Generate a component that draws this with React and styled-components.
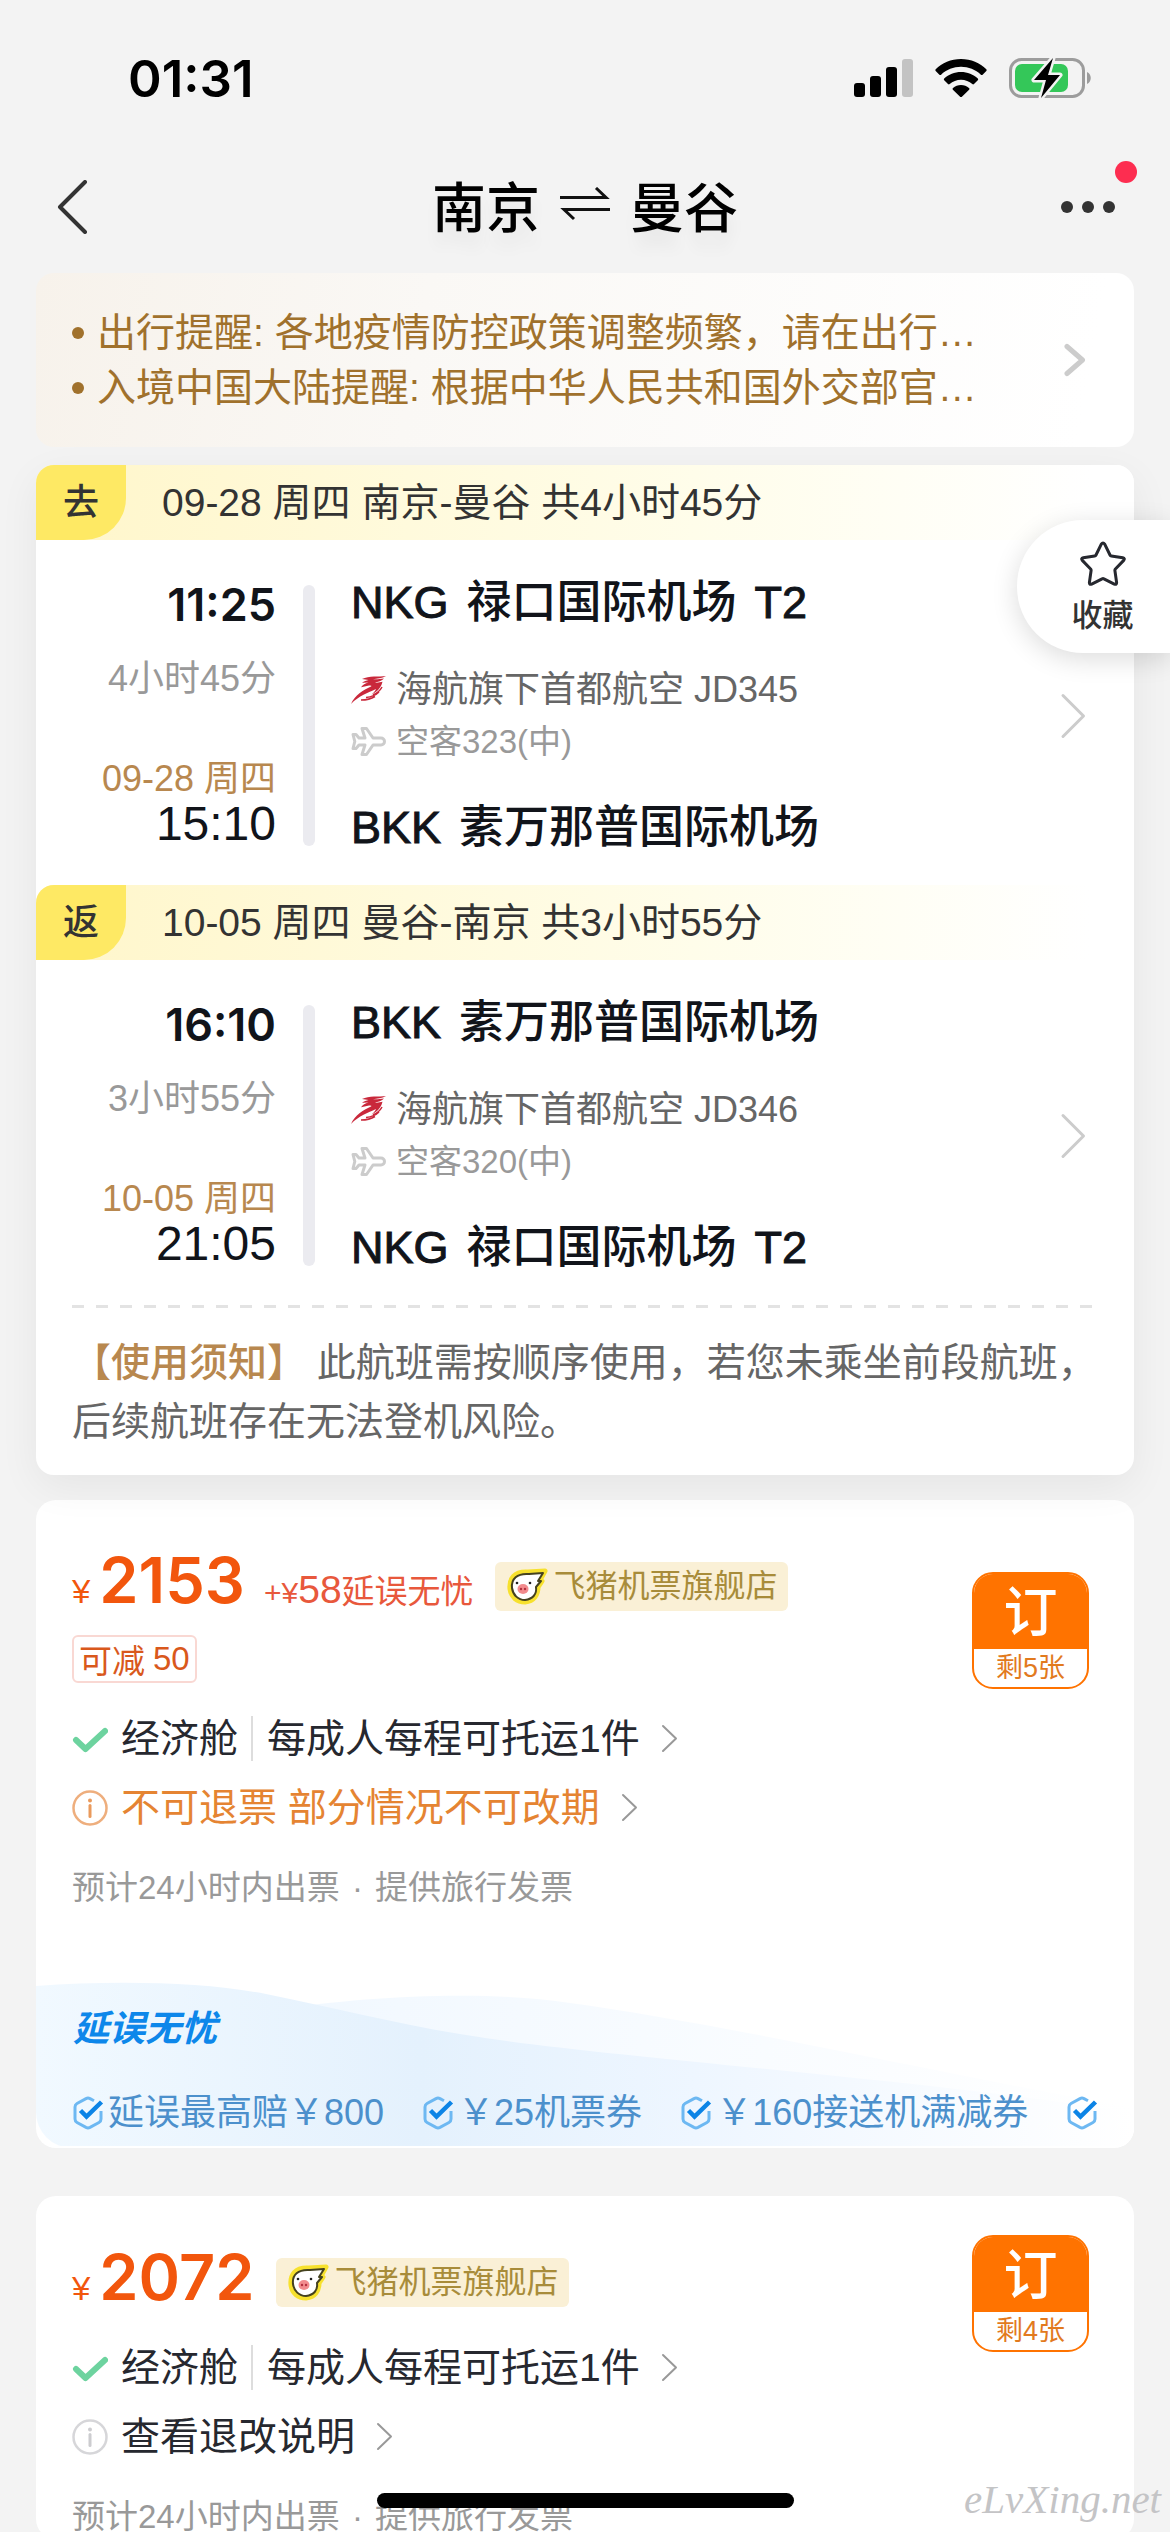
import styled, { createGlobalStyle, ThemeProvider } from "styled-components";

const theme = {
  text: "#333333",
  dark: "#11141a",
  muted: "#999999",
  grey: "#666666",
  brown: "#a0712c",
  tan: "#b8884f",
  orange: "#ff7300",
  price: "#f2560d",
  blue: "#4c90cc",
  medium: 500,
  display: `Inter, "Noto Sans CJK SC", sans-serif`,
};

const GlobalStyle = createGlobalStyle`
  *, *::before, *::after {
    box-sizing: border-box;
  }

  body {
    margin: 0;
    background: #f3f3f3;
    font-family: "Liberation Sans", "Noto Sans CJK SC", sans-serif;
    color: ${theme.text};
  }

  button {
    padding: 0;
    border: 0;
    background: none;
    color: inherit;
    font: inherit;
    text-align: left;
  }

  h1, h2, p, ul {
    margin: 0;
    padding: 0;
    font-weight: normal;
  }

  svg {
    display: block;
    flex: none;
  }
`;

const StyledScreen = styled.div`
  position: relative;
  height: 100vh;
  overflow: hidden;
`;

const StyledStatusBar = styled.div`
  display: flex;
  align-items: center;
  justify-content: space-between;
  height: 141px;
  padding: 15px 78px 0 128px;
`;

const StyledClock = styled.span`
  font-family: ${({ theme }) => theme.display};
  font-size: 51px;
  font-weight: 600;
  color: #000;
`;

const StyledStatusIcons = styled.div`
  display: flex;
  align-items: center;
  gap: 22px;
`;

const StyledNav = styled.header`
  position: relative;
  display: flex;
  align-items: center;
  justify-content: space-between;
  height: 132px;
  padding: 0 54px;
`;

const StyledNavButton = styled.button`
  display: flex;
  justify-content: ${({ $end }) => ($end ? "flex-end" : "flex-start")};
  width: 90px;
`;

const StyledTitle = styled.h1`
  display: flex;
  align-items: center;
  gap: 20px;
  padding-bottom: 6px;
  font-size: 54px;
  font-weight: ${({ theme }) => theme.medium};
  color: #000;
  text-shadow: 0 16px 15px rgba(0, 0, 0, 0.05);
`;

const StyledDot = styled.span`
  position: absolute;
  top: 20px;
  right: 33px;
  width: 22px;
  height: 22px;
  border-radius: 50%;
  background: #fd2d50;
`;

const StyledMain = styled.main`
  padding: 0 36px;
`;

const StyledNotice = styled.section`
  display: flex;
  align-items: center;
  justify-content: space-between;
  height: 174px;
  padding: 0 48px 0 36px;
  border-radius: 18px;
  background: linear-gradient(100deg, #f7f2eb, #faf8f5 35%, #ffffff 95%);
`;

const StyledNoticeList = styled.ul`
  list-style: none;
  font-size: 39px;
  line-height: 55px;
  white-space: nowrap;
  color: ${({ theme }) => theme.brown};
`;

const StyledNoticeItem = styled.li`
  display: flex;
  align-items: center;
  gap: 13px;

  &::before {
    content: "";
    flex: none;
    width: 12px;
    height: 12px;
    border-radius: 50%;
    background: currentColor;
  }
`;

const StyledFlights = styled.section`
  position: relative;
  margin-top: 18px;
  border-radius: 18px;
  background: #fff;
  box-shadow: 0 12px 42px rgba(0, 0, 0, 0.06);
`;

const StyledLegHeader = styled.h2`
  display: flex;
  gap: 36px;
  height: 75px;
  border-radius: 18px;
  background: linear-gradient(90deg, #fff6ca, #fffdea 60%, #ffffff 96%);
  font-size: 39px;
  line-height: 75px;
`;

const StyledLegTag = styled.span`
  width: 90px;
  border-radius: 18px 0 42px 0;
  background: #fee964;
  font-size: 36px;
  font-weight: ${({ theme }) => theme.medium};
  text-align: center;
`;

const StyledLeg = styled.div`
  display: flex;
  align-items: stretch;
  padding: 45px 48px 39px 0;
`;

const StyledTimes = styled.div`
  display: flex;
  flex-direction: column;
  justify-content: space-between;
  align-items: flex-end;
  width: 240px;
  height: 261px;
`;

const StyledTimeGroup = styled.div`
  display: flex;
  flex-direction: column;
  align-items: flex-end;
  gap: ${({ $wide }) => ($wide ? "33px" : "0")};
`;

const StyledTime = styled.span`
  font-family: ${({ $strong, theme }) => ($strong ? theme.display : "inherit")};
  font-size: ${({ $strong }) => ($strong ? "45px" : "48px")};
  font-weight: ${({ $strong }) => ($strong ? 600 : 400)};
  line-height: ${({ $strong }) => ($strong ? "39px" : "45px")};
  color: ${({ theme }) => theme.dark};
`;

const StyledSmall = styled.span`
  font-size: 36px;
  line-height: 44px;
  color: ${({ $tan, theme }) => ($tan ? theme.tan : theme.muted)};
`;

const StyledBar = styled.span`
  width: 12px;
  margin: 0 36px 0 27px;
  border-radius: 6px;
  background: #ebebf0;
`;

const StyledRoute = styled.div`
  flex: 1;
  display: flex;
  flex-direction: column;
  justify-content: space-between;
`;

const StyledAirport = styled.span`
  display: flex;
  gap: 18px;
  font-size: 45px;
  font-weight: ${({ theme }) => theme.medium};
  line-height: 36px;
  color: ${({ theme }) => theme.dark};
`;

const StyledCode = styled.span`
  -webkit-text-stroke: 1px currentColor;
`;

const StyledCarrier = styled.span`
  display: flex;
  align-items: center;
  gap: 10px;
  font-size: ${({ $plane }) => ($plane ? "33px" : "36px")};
  line-height: 52px;
  color: ${({ $plane, theme }) => ($plane ? theme.muted : theme.grey)};
`;

const StyledArrow = styled.button`
  display: flex;
  align-items: center;
`;

const StyledDivider = styled.div`
  height: 3px;
  margin: 0 36px;
  background: repeating-linear-gradient(90deg, #e3e3e3 0 12px, transparent 12px 24px);
`;

const StyledUsage = styled.p`
  padding: 25px 36px 24px;
  font-size: 39px;
  line-height: 59px;
  color: ${({ theme }) => theme.grey};
`;

const StyledUsageLabel = styled.strong`
  font-weight: ${({ theme }) => theme.medium};
  color: ${({ theme }) => theme.tan};
`;

const StyledFavourite = styled.button`
  position: absolute;
  top: 520px;
  right: 0;
  display: flex;
  flex-direction: column;
  align-items: center;
  gap: 7px;
  width: 153px;
  height: 133px;
  padding: 21px 0 0 18px;
  border-radius: 66px 0 0 66px;
  background: #fff;
  box-shadow: 0 6px 27px rgba(0, 0, 0, 0.14);
  font-size: 31px;
  font-weight: ${({ theme }) => theme.medium};
  line-height: 44px;
`;

const StyledOffer = styled.article`
  margin-top: ${({ $first }) => ($first ? "25px" : "48px")};
  border-radius: 20px;
  background: #fff;
`;

const StyledOfferTop = styled.div`
  display: flex;
  align-items: center;
  justify-content: space-between;
  padding: 45px 45px 0 36px;
`;

const StyledOfferInfo = styled.div`
  padding-bottom: 33px;
`;

const StyledPriceRow = styled.div`
  display: flex;
  align-items: center;
  height: 71px;
  padding-top: 12px;
`;

const StyledPrice = styled.span`
  display: flex;
  align-items: baseline;
  gap: 9px;
  font-size: 33px;
  line-height: 71px;
  color: ${({ theme }) => theme.price};
`;

const StyledAmount = styled.b`
  font-family: ${({ theme }) => theme.display};
  font-size: 63px;
  font-weight: 600;
`;

const StyledExtra = styled.span`
  margin-left: 10px;
  color: #e8583c;

  small {
    font-size: 30px;
  }

  b {
    font-size: 39px;
    font-weight: 400;
  }
`;

const StyledShop = styled.span`
  display: flex;
  align-items: center;
  gap: 6px;
  height: 49px;
  margin-left: 21px;
  padding: 0 10px;
  border-radius: 6px;
  background: #faf0d6;
  font-size: 32px;
  line-height: 49px;
  color: #a88c3a;
`;

const StyledCoupon = styled.span`
  display: flex;
  align-items: center;
  gap: 8px;
  width: max-content;
  height: 48px;
  margin-top: 19px;
  padding: 0 5px;
  border: 2px solid #f9d8d3;
  border-radius: 6px;
  font-size: 33px;
  color: #d9581c;
`;

/* the button is taller than the price line beside it */
const StyledOrder = styled.button`
  display: flex;
  flex-direction: column;
  width: 117px;
  height: 117px;
  margin: -8px 0;
  border: 2px solid ${({ theme }) => theme.orange};
  border-radius: 21px;
  overflow: hidden;
  font-size: 27px;
  line-height: 38px;
  text-align: center;
  color: #e27a1e;
`;

const StyledOrderLabel = styled.span`
  width: 100%;
  height: 75px;
  background: ${({ theme }) => theme.orange};
  font-size: 54px;
  font-weight: ${({ theme }) => theme.medium};
  line-height: 78px;
  text-align: center;
  color: #fff;
`;

const StyledLeft = styled.span`
  width: 100%;
  text-align: center;
`;

const StyledDetails = styled.div`
  display: flex;
  flex-direction: column;
  align-items: flex-start;
  gap: 24px;
  padding: 0 36px;
`;

const StyledDetail = styled.button`
  display: flex;
  align-items: center;
  gap: 13px;
  font-size: 39px;
  line-height: 45px;
  color: ${({ $warn }) => ($warn ? "#e58432" : "#26282f")};
`;

const StyledDetailText = styled.span`
  padding-right: 8px;

  & + & {
    padding-left: 14px;
    border-left: 2px solid #dddddd;
  }

  &:has(+ &) {
    padding-right: 0;
  }
`;

const StyledFootnote = styled.p`
  padding: 35px 36px 0;
  font-size: 33px;
  line-height: 45px;
  color: ${({ theme }) => theme.muted};

  span {
    margin: 0 3px;
  }
`;

const StyledBenefits = styled.div`
  position: relative;
  height: 170px;
  margin-top: 68px;
  padding: 28px 0 0 37px;
  border-radius: 0 0 20px 36px;
  overflow: hidden;
`;

const StyledWave = styled.svg`
  position: absolute;
  inset: 0;
  width: 100%;
  height: 100%;
`;

const StyledBenefitsTitle = styled.h2`
  position: relative;
  font-size: 36px;
  font-style: italic;
  font-weight: 700;
  line-height: 45px;
  color: #0d87ea;
`;

const StyledBenefitList = styled.ul`
  position: relative;
  display: flex;
  gap: 39px;
  margin-top: 39px;
  list-style: none;
  font-size: 36px;
  line-height: 45px;
  white-space: nowrap;
  color: ${({ theme }) => theme.blue};
`;

const StyledBenefit = styled.li`
  display: flex;
  align-items: center;
  gap: 4px;
`;

const StyledHomeBar = styled.div`
  position: absolute;
  bottom: 24px;
  left: 50%;
  width: 417px;
  height: 15px;
  margin-left: -208px;
  border-radius: 8px;
  background: #000;
`;

const StyledWatermark = styled.span`
  position: absolute;
  right: 9px;
  bottom: 9px;
  font-family: "Liberation Serif", serif;
  font-size: 41px;
  font-style: italic;
  line-height: 48px;
  color: #c4c4c6;
`;

const Chevron = ({ width, height, stroke, color }) => (
  <svg width={width} height={height} viewBox={`0 0 ${width} ${height}`} fill="none">
    <path
      d={`M${stroke} ${stroke / 2 + 1}L${width - stroke / 2 - 1} ${height / 2}L${stroke} ${height - stroke / 2 - 1}`}
      stroke={color}
      strokeWidth={stroke}
      strokeLinecap="round"
      strokeLinejoin="round"
    />
  </svg>
);

const SignalIcon = () => (
  <svg width="59" height="38" viewBox="0 0 59 38">
    <rect x="0" y="24" width="11" height="14" rx="3" />
    <rect x="16" y="17" width="11" height="21" rx="3" />
    <rect x="32" y="8" width="11" height="30" rx="3" />
    <rect x="48" y="0" width="11" height="38" rx="3" fill="#c3c3c3" />
  </svg>
);

const WifiIcon = () => (
  <svg width="52" height="38" viewBox="0 0 52 38">
    <path d="M26 0C36 0 45 4 51.300 10.200c.5.5.5 1.200 0 1.700l-3.700 3.800c-.5.5-1.200.5-1.700 0C40.500 10.600 33.500 7.800 26 7.800S11.500 10.600 6.100 15.700c-.5.5-1.200.5-1.700 0L.7 11.900c-.5-.5-.5-1.200 0-1.700C7 4 16 0 26 0z" />
    <path d="M26 13c6.500 0 12.400 2.400 16.800 6.600.5.500.5 1.200 0 1.700l-3.800 3.800c-.5.500-1.200.5-1.700 0C34.300 22.400 30.300 20.800 26 20.800s-8.300 1.600-11.300 4.300c-.5.500-1.200.5-1.700 0l-3.800-3.800c-.5-.5-.5-1.200 0-1.700C13.600 15.400 19.500 13 26 13z" />
    <path d="M26 26c3 0 5.800 1.100 8 2.900.6.500.6 1.300.1 1.800l-7.200 7c-.5.500-1.300.5-1.800 0l-7.200-7c-.5-.5-.5-1.300.1-1.800C20.200 27.100 23 26 26 26z" />
  </svg>
);

const BatteryIcon = () => (
  <svg width="83" height="42" viewBox="0 0 83 42">
    <rect x="1.500" y="2.500" width="73" height="37" rx="11" fill="none" stroke="#9c9c9c" strokeWidth="3" />
    <path d="M78 15c5 2 5 10 0 12z" fill="#9c9c9c" />
    <rect x="6" y="7" width="53" height="28" rx="7" fill="#34c759" />
    <path
      d="M44 1L25 23h12l-5 18 19-23H39z"
      stroke="#f3f3f3"
      strokeWidth="5"
      strokeLinejoin="round"
      paintOrder="stroke"
    />
  </svg>
);

const SwapIcon = () => (
  <svg width="50" height="34" viewBox="0 0 50 34" fill="none" stroke="#111" strokeWidth="3">
    <path d="M0 10.500h46L36 1" />
    <path d="M50 22.500H4L14 32" />
  </svg>
);

const MoreIcon = () => (
  <svg width="56" height="14" viewBox="0 0 56 14" fill="#333">
    <circle cx="7" cy="7" r="6" />
    <circle cx="28" cy="7" r="6" />
    <circle cx="49" cy="7" r="6" />
  </svg>
);

const StarIcon = () => (
  <svg width="46" height="46" viewBox="0 0 46 46" fill="none" stroke="#26282f" strokeWidth="3" strokeLinejoin="round">
    <path d="M21.300 3.200Q23 .8 24.700 3.200L30 14q.4.800 1.300.9l11.500 1.900q2.500.6.900 2.600l-8.300 8.600q-.6.700-.5 1.500l1.700 12q.1 2.500-2.300 1.600l-10.400-5.300q-.9-.4-1.800 0l-10.400 5.300q-2.400.9-2.300-1.600l1.700-12q.1-.8-.5-1.500L2.300 19.400q-1.600-2 .9-2.600l11.500-1.900q.9-.1 1.300-.9z" />
  </svg>
);

const AirlineIcon = () => (
  <svg width="35" height="28" viewBox="0 0 35 28" fill="#c9283b">
    <path d="M11 3C18-.5 28 1 35 0c-4 2.500-9 2.500-13 3.200 4 .3 7-.1 11-.7-2 2.300-6 3.500-9.500 4 2.500.4 5.500 0 8-.7C30 12 26 16 20.500 18.500c2.500-2 4-4 4.500-5.500C17 17 8 19.500 0 28 4 19 12 14 20 10.500c1-.8-.5-1.200-3-.8l-7 1.600c2-2.600 4-3.800 7.500-4.800l-6.500.3c2-1.500 4.500-2.200 6.500-2.700z" />
    <path
      d="M31 11c-2 4-5 6-9 8M28 16c-3 3-8 5-13 5.500M24 20.500c-4 2.500-9 3.500-14 3.500"
      fill="none"
      stroke="#c9283b"
      strokeWidth="1.500"
    />
  </svg>
);

const PlaneIcon = () => (
  <svg width="35" height="31" viewBox="0 0 35 31" fill="none" stroke="#cccccc" strokeWidth="3" strokeLinejoin="round">
    <path d="M22 12h8a3.500 3.500 0 0 1 0 7h-8l-6.500 9.500H11L14 19H8l-3 3.500H2l1.800-7L2 8.500h3L8 12h6L11 2.500h4.500z" />
  </svg>
);

const PigIcon = () => (
  <svg width="43" height="38" viewBox="0 0 43 38">
    <path
      d="M40 3L23 4C9 3 4 11 5 21c1 8 7 13 15 13 9-1 13-7 13-15l4-6-2-1z"
      fill="#f7e12e"
      stroke="#f7e12e"
      strokeWidth="5"
      strokeLinejoin="round"
    />
    <path
      d="M38 5L24 6C12 5 6 11 7 20c1 7 6 12 13 12 8-1 12-6 11-13l5-6-3 0z"
      fill="#fff"
      stroke="#45421f"
      strokeWidth="2"
      strokeLinejoin="round"
    />
    <ellipse cx="18" cy="21" rx="5.500" ry="5" fill="#f28b8e" />
    <circle cx="16" cy="21" r="1.200" fill="#b3303e" />
    <circle cx="20" cy="21" r="1.200" fill="#b3303e" />
    <circle cx="12" cy="15" r="1.300" fill="#222" />
    <circle cx="25" cy="15" r="1.300" fill="#222" />
  </svg>
);

const CheckIcon = () => (
  <svg width="36" height="36" viewBox="0 0 36 36" fill="none">
    <path d="M4 19l9.500 9L33 10" stroke="#6dd39f" strokeWidth="6" strokeLinecap="round" strokeLinejoin="round" />
  </svg>
);

const InfoIcon = ({ color }) => (
  <svg width="36" height="36" viewBox="0 0 36 36" fill="none" stroke={color}>
    <circle cx="18" cy="18" r="16.500" strokeWidth="2.500" opacity=".8" />
    <path d="M18 15.500v11" strokeWidth="3" strokeLinecap="round" />
    <circle cx="18" cy="10.500" r="1" strokeWidth="2" />
  </svg>
);

const HexCheckIcon = () => (
  <svg width="31" height="34" viewBox="0 0 31 34" fill="none">
    <path
      d="M21 4.800L17 2.600q-2-1-4 0L4 7.500Q2 8.600 2 11v12q0 2.400 2 3.500l9 4.900q2 1 4 0l9-4.900q2-1.100 2-3.500V15"
      stroke="#6db8f2"
      strokeWidth="3"
    />
    <path d="M7.500 14.500l6 6L28.500 6" stroke="#0c84e6" strokeWidth="4.500" />
  </svg>
);

const legs = [
  {
    tag: "去",
    summary: "09-28 周四 南京-曼谷 共4小时45分",
    depart: "11:25",
    duration: "4小时45分",
    date: "09-28 周四",
    arrive: "15:10",
    from: { code: "NKG", name: "禄口国际机场", terminal: "T2" },
    carrier: "海航旗下首都航空 JD345",
    plane: "空客323(中)",
    to: { code: "BKK", name: "素万那普国际机场" },
  },
  {
    tag: "返",
    summary: "10-05 周四 曼谷-南京 共3小时55分",
    depart: "16:10",
    duration: "3小时55分",
    date: "10-05 周四",
    arrive: "21:05",
    from: { code: "BKK", name: "素万那普国际机场" },
    carrier: "海航旗下首都航空 JD346",
    plane: "空客320(中)",
    to: { code: "NKG", name: "禄口国际机场", terminal: "T2" },
  },
];

const benefits = ["延误最高赔￥800", "￥25机票券", "￥160接送机满减券", ""];

const Airport = ({ code, name, terminal }) => (
  <StyledAirport>
    <StyledCode>{code}</StyledCode>
    <span>{name}</span>
    {terminal && <StyledCode>{terminal}</StyledCode>}
  </StyledAirport>
);

const Leg = ({ leg }) => (
  <>
    <StyledLegHeader>
      <StyledLegTag>{leg.tag}</StyledLegTag>
      {leg.summary}
    </StyledLegHeader>
    <StyledLeg>
      <StyledTimes>
        <StyledTimeGroup $wide>
          <StyledTime $strong>{leg.depart}</StyledTime>
          <StyledSmall>{leg.duration}</StyledSmall>
        </StyledTimeGroup>
        <StyledTimeGroup>
          <StyledSmall $tan>{leg.date}</StyledSmall>
          <StyledTime>{leg.arrive}</StyledTime>
        </StyledTimeGroup>
      </StyledTimes>
      <StyledBar />
      <StyledRoute>
        <Airport {...leg.from} />
        <div>
          <StyledCarrier>
            <AirlineIcon />
            {leg.carrier}
          </StyledCarrier>
          <StyledCarrier $plane>
            <PlaneIcon />
            {leg.plane}
          </StyledCarrier>
        </div>
        <Airport {...leg.to} />
      </StyledRoute>
      <StyledArrow aria-label={leg.summary}>
        <Chevron width={26} height={46} stroke={3} color="#cccccc" />
      </StyledArrow>
    </StyledLeg>
  </>
);

const Offer = ({ first, price, extra, coupon, left, rule, warn, children }) => (
  <StyledOffer $first={first}>
    <StyledOfferTop>
      <StyledOfferInfo>
        <StyledPriceRow>
          <StyledPrice>
            ¥<StyledAmount>{price}</StyledAmount>
            {extra && (
              <StyledExtra>
                <small>+¥</small>
                <b>58</b>
                {extra}
              </StyledExtra>
            )}
          </StyledPrice>
          <StyledShop>
            <PigIcon />
            飞猪机票旗舰店
          </StyledShop>
        </StyledPriceRow>
        {coupon && (
          <StyledCoupon>
            可减<span>{coupon}</span>
          </StyledCoupon>
        )}
      </StyledOfferInfo>
      <StyledOrder>
        <StyledOrderLabel>订</StyledOrderLabel>
        <StyledLeft>剩{left}张</StyledLeft>
      </StyledOrder>
    </StyledOfferTop>
    <StyledDetails>
      <StyledDetail>
        <CheckIcon />
        <StyledDetailText>经济舱</StyledDetailText>
        <StyledDetailText>每成人每程可托运1件</StyledDetailText>
        <Chevron width={17} height={29} stroke={2} color="#999999" />
      </StyledDetail>
      <StyledDetail $warn={warn}>
        <InfoIcon color={warn ? "#ea9a5c" : "#cccccf"} />
        <StyledDetailText>{rule}</StyledDetailText>
        <Chevron width={17} height={29} stroke={2} color="#999999" />
      </StyledDetail>
    </StyledDetails>
    <StyledFootnote>
      预计24小时内出票 <span>·</span> 提供旅行发票
    </StyledFootnote>
    {children}
  </StyledOffer>
);

const Benefits = () => (
  <StyledBenefits>
    <StyledWave viewBox="0 0 1098 170" preserveAspectRatio="none">
      <defs>
        <linearGradient id="wave-front">
          <stop offset="0" stopColor="#f1f9ff" />
          <stop offset=".35" stopColor="#e4f1fd" />
          <stop offset=".6" stopColor="#eef6ff" />
          <stop offset="1" stopColor="#ffffff" />
        </linearGradient>
        <linearGradient id="wave-back">
          <stop offset="0" stopColor="#f1f8ff" />
          <stop offset="1" stopColor="#ffffff" />
        </linearGradient>
      </defs>
      <path d="M240 32C330 18 450 12 534 25C700 48 900 95 1098 130V168H240z" fill="url(#wave-back)" />
      <path d="M0 8C80 2 170 4 230 16C300 30 360 46 430 57C560 79 900 102 1098 135V168H0z" fill="url(#wave-front)" />
    </StyledWave>
    <StyledBenefitsTitle>延误无忧</StyledBenefitsTitle>
    <StyledBenefitList>
      {benefits.map((benefit) => (
        <StyledBenefit key={benefit}>
          <HexCheckIcon />
          {benefit}
        </StyledBenefit>
      ))}
    </StyledBenefitList>
  </StyledBenefits>
);

const App = () => {
  return (
    <ThemeProvider theme={theme}>
      <GlobalStyle />
      <StyledScreen lang="zh-CN">
        <StyledStatusBar>
          <StyledClock>01:31</StyledClock>
          <StyledStatusIcons>
            <SignalIcon />
            <WifiIcon />
            <BatteryIcon />
          </StyledStatusIcons>
        </StyledStatusBar>
        <StyledNav>
          <StyledNavButton aria-label="返回">
            <svg width="34" height="54" viewBox="0 0 34 54" fill="none" stroke="#333" strokeWidth="4">
              <path d="M31 2L6 27l25 25" strokeLinecap="round" strokeLinejoin="round" />
            </svg>
          </StyledNavButton>
          <StyledTitle>
            南京
            <SwapIcon />
            曼谷
          </StyledTitle>
          <StyledNavButton $end aria-label="更多">
            <MoreIcon />
          </StyledNavButton>
          <StyledDot />
        </StyledNav>
        <StyledMain>
          <StyledNotice>
            <StyledNoticeList>
              <StyledNoticeItem>出行提醒: 各地疫情防控政策调整频繁，请在出行…</StyledNoticeItem>
              <StyledNoticeItem>入境中国大陆提醒: 根据中华人民共和国外交部官…</StyledNoticeItem>
            </StyledNoticeList>
            <StyledArrow aria-label="出行提醒">
              <Chevron width={24} height={34} stroke={5} color="#cccccc" />
            </StyledArrow>
          </StyledNotice>
          <StyledFlights>
            {legs.map((leg) => (
              <Leg key={leg.tag} leg={leg} />
            ))}
            <StyledDivider />
            <StyledUsage>
              <StyledUsageLabel>【使用须知】</StyledUsageLabel> 此航班需按顺序使用，若您未乘坐前段航班，后续航班存在无法登机风险。
            </StyledUsage>
          </StyledFlights>
          <Offer first warn price="2153" extra="延误无忧" coupon="50" left="5" rule="不可退票 部分情况不可改期">
            <Benefits />
          </Offer>
          <Offer price="2072" left="4" rule="查看退改说明" />
        </StyledMain>
        <StyledFavourite>
          <StarIcon />
          收藏
        </StyledFavourite>
        <StyledHomeBar />
        <StyledWatermark>eLvXing.net</StyledWatermark>
      </StyledScreen>
    </ThemeProvider>
  );
};

export default App;
